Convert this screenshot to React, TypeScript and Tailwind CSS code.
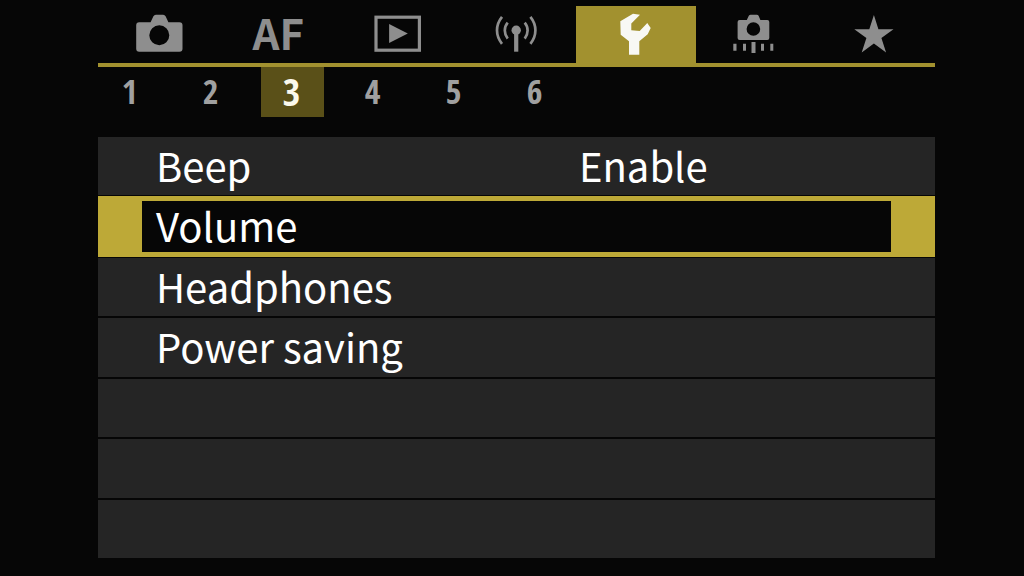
import { useState, type ReactNode } from "react";

function CameraIcon() {
  return (
    <svg viewBox="0 0 64 57" className="h-[57px] w-16" fill="currentColor" aria-hidden="true">
      <path
        fillRule="evenodd"
        d="M13.2 16.3H24.6L27.4 10.2Q28.2 8.7 29.8 8.7H37.2Q38.8 8.7 39.6 10.2L42.4 16.3H53.5Q56.5 16.3 56.5 19.3V42.7Q56.5 45.7 53.5 45.7H13.2Q10.2 45.7 10.2 42.7V19.3Q10.2 16.3 13.2 16.3ZM33.3 19.3a10 10 0 1 0 0 20a10 10 0 1 0 0-20Z"
      />
    </svg>
  );
}

function PlaybackIcon() {
  return (
    <svg viewBox="0 0 64 57" className="h-[57px] w-16" fill="currentColor" aria-hidden="true">
      <rect x="11" y="11.2" width="43.4" height="33" fill="none" stroke="currentColor" strokeWidth="3.2" />
      <path d="M24.1 18L42.8 27.5L24.1 37Z" />
    </svg>
  );
}

function WirelessIcon() {
  return (
    <svg viewBox="0 0 64 57" className="h-[57px] w-16" fill="currentColor" aria-hidden="true">
      <circle cx="32.2" cy="24.3" r="4.7" />
      <rect x="30.1" y="25" width="4.2" height="20.7" />
      <g fill="none" stroke="currentColor" strokeWidth="2.7">
        <path d="M18 10.8Q13 17 13 24.3T18 37.8" />
        <path d="M46.4 10.8Q51.4 17 51.4 24.3T46.4 37.8" />
        <path d="M23.7 16.6Q20.8 20 20.8 24.5T23.7 32.6" />
        <path d="M40.7 16.6Q43.6 20 43.6 24.5T40.7 32.6" />
      </g>
    </svg>
  );
}

function WrenchIcon() {
  return (
    <svg viewBox="0 0 64 57" className="h-[57px] w-16" fill="currentColor" aria-hidden="true">
      <path d="M29 7.7L36 8.7L27.3 17.6V24.3L35.7 25L43.3 17L46.7 22L43.7 28.3L35.3 35.3V48.7H25V35.3L16.7 28.7L16.3 15.3Z" />
    </svg>
  );
}

function CustomShootingIcon() {
  return (
    <svg viewBox="0 0 64 57" className="h-[57px] w-16" fill="currentColor" aria-hidden="true">
      <path
        fillRule="evenodd"
        d="M15.6 14H22.8L24.8 9.8Q25.4 8.7 26.6 8.7H32.8Q34 8.7 34.6 9.8L36.4 14H43.3Q45.3 14 45.3 16V32Q45.3 34 43.3 34H15.6Q13.6 34 13.6 32V16Q13.6 14 15.6 14ZM29.4 16.2a6.8 6.8 0 1 0 0 13.6a6.8 6.8 0 1 0 0-13.6Z"
      />
      <path d="M9.3 37.7h3.2v7h-3.2zM19 37.7h3v7h-3zM27.5 36h4v11h-4zM37 37.7h3v7h-3zM46.3 37.7h3v7h-3z" />
    </svg>
  );
}

function StarIcon() {
  return (
    <svg viewBox="0 0 64 57" className="h-[57px] w-16" fill="currentColor" aria-hidden="true">
      <path d="M30.9 9L35.4 23.3H50.5L38.4 32L43.1 46.4L30.9 37.6L18.7 46.4L23.4 32L11.3 23.3H26.3Z" />
    </svg>
  );
}

const tabs: { id: string; content: ReactNode }[] = [
  { id: "Shooting", content: <CameraIcon /> },
  { id: "Autofocus", content: <span className="pb-1.5 pl-0.5 text-[42px] leading-[48px] font-bold">AF</span> },
  { id: "Playback", content: <PlaybackIcon /> },
  { id: "Wireless", content: <WirelessIcon /> },
  { id: "Setup", content: <WrenchIcon /> },
  { id: "Custom shooting", content: <CustomShootingIcon /> },
  { id: "My Menu", content: <StarIcon /> },
];

const pages = [1, 2, 3, 4, 5, 6];

const rows: { label: string; value?: string }[] = [
  { label: "Beep", value: "Enable" },
  { label: "Volume" },
  { label: "Headphones" },
  { label: "Power saving" },
];

const emptyRows = [0, 1, 2];

export default function App() {
  const [tab, setTab] = useState("Setup");
  const [page, setPage] = useState(3);
  const [selected, setSelected] = useState("Volume");

  return (
    <main className="flex min-h-screen flex-col bg-[#060606] pt-1.5 pr-[89px] pb-[18px] pl-[98px] font-['Noto_Sans_CJK_SC','Noto_Sans',sans-serif] text-white">
      <nav aria-label="Menu tabs" className="grid grid-cols-7 border-b-4 border-[#a2912f]">
        {tabs.map((t) => (
          <button
            key={t.id}
            type="button"
            aria-label={t.id}
            aria-pressed={tab === t.id}
            onClick={() => setTab(t.id)}
            className={`flex h-[57px] items-center justify-center ${
              tab === t.id ? "bg-[#a2912f] text-[#f8f8f4]" : "text-[#8e8e8e]"
            }`}
          >
            {t.content}
          </button>
        ))}
      </nav>

      <nav
        aria-label="Pages"
        className="flex gap-[18px] pl-px font-['Open_Sans_Condensed','Liberation_Sans_Narrow','Noto_Sans_CJK_SC',sans-serif] font-bold"
      >
        {pages.map((p) => (
          <button
            key={p}
            type="button"
            aria-pressed={page === p}
            onClick={() => setPage(p)}
            className={`h-[50px] w-[63px] pr-0.5 pb-0.5 text-center leading-[48px] ${
              page === p ? "bg-[#5a5018] text-[38px] text-[#fbf9ec]" : "text-[34px] text-[#a0a0a0]"
            }`}
          >
            {p}
          </button>
        ))}
      </nav>

      <ul className="mt-5 grid flex-1 auto-rows-fr gap-0.5">
        {rows.map((r) => (
          <li key={r.label} className={`flex ${selected === r.label ? "-my-px" : ""}`}>
            <button
              type="button"
              onClick={() => setSelected(r.label)}
              className={`grid flex-1 grid-cols-[7fr_5fr] items-center border-x-[44px] border-y-[5px] pb-[3px] text-left text-[40px] leading-[44px] ${
                selected === r.label ? "border-[#bda937] bg-[#060606]" : "border-[#252525] bg-[#252525]"
              }`}
            >
              <span className="pl-3.5">{r.label}</span>
              <span>{r.value}</span>
            </button>
          </li>
        ))}
        {emptyRows.map((n) => (
          <li key={n} className="bg-[#252525]" />
        ))}
      </ul>
    </main>
  );
}
